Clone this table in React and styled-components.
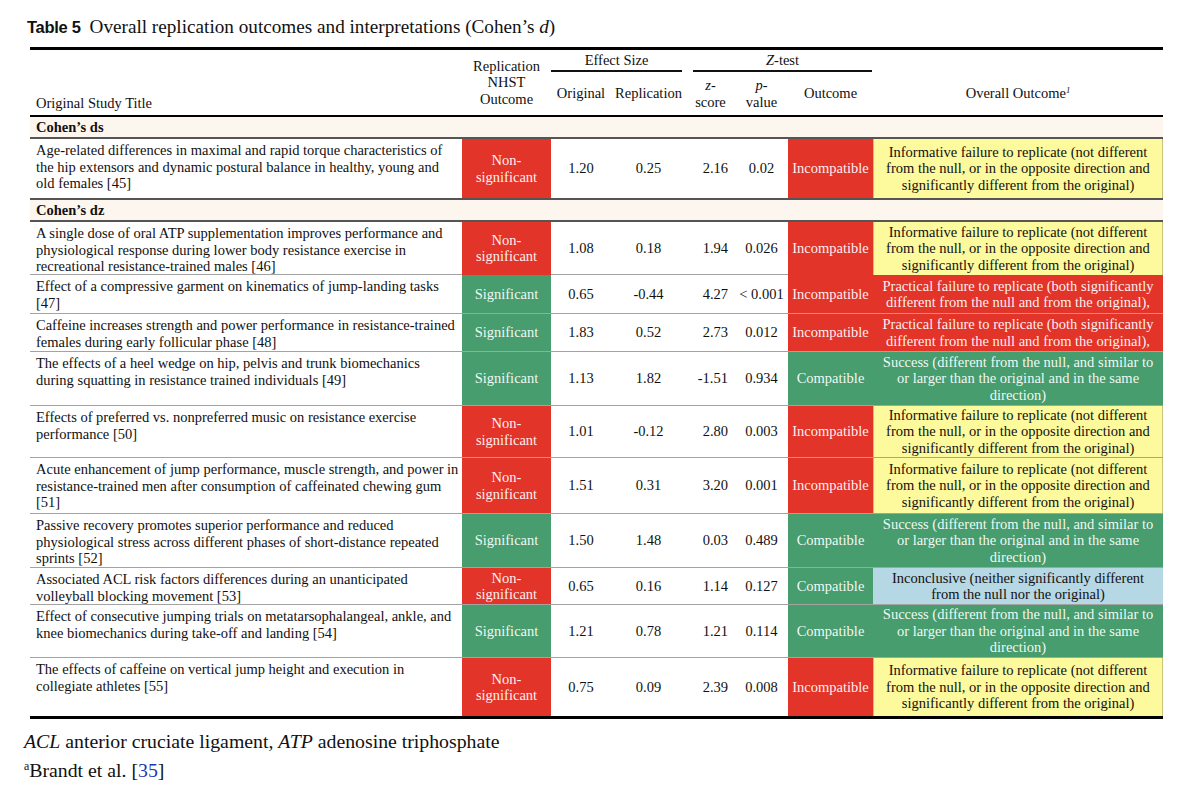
import React from "react";
import styled, { createGlobalStyle } from "styled-components";

const GlobalStyle = createGlobalStyle`
  body {
    margin: 0;
    background: #fff;
    color: #111;
    font-family: "Liberation Serif", "Times New Roman", serif;
  }
`;

const COLS = "432px 89px 60px 75px 49px 53px 85px 290px";

const FILL = {
  red: "#e3342a",
  green: "#479d6e",
  yellow: "#fdf99d",
  blue: "#b6d7e4",
};

const OVERALL = {
  informative: {
    fill: "yellow",
    lines: [
      "Informative failure to replicate (not different",
      "from the null, or in the opposite direction and",
      "significantly different from the original)",
    ],
  },
  practical: {
    fill: "red",
    lines: [
      "Practical failure to replicate (both significantly",
      "different from the null and from the original),",
    ],
  },
  success: {
    fill: "green",
    lines: [
      "Success (different from the null, and similar to",
      "or larger than the original and in the same",
      "direction)",
    ],
  },
  inconclusive: {
    fill: "blue",
    lines: [
      "Inconclusive (neither significantly different",
      "from the null nor the original)",
    ],
  },
};

const sections = [
  {
    label: "Cohen’s ds",
    rows: [
      {
        title: [
          "Age-related differences in maximal and rapid torque characteristics of",
          "the hip extensors and dynamic postural balance in healthy, young and",
          "old females [45]",
        ],
        sig: false, orig: "1.20", rep: "0.25", z: "2.16", p: "0.02",
        ok: false, overall: "informative", h: 61,
      },
    ],
  },
  {
    label: "Cohen’s dz",
    rows: [
      {
        title: [
          "A single dose of oral ATP supplementation improves performance and",
          "physiological response during lower body resistance exercise in",
          "recreational resistance-trained males [46]",
        ],
        sig: false, orig: "1.08", rep: "0.18", z: "1.94", p: "0.026",
        ok: false, overall: "informative", h: 53,
      },
      {
        title: ["Effect of a compressive garment on kinematics of jump-landing tasks", "[47]"],
        sig: true, orig: "0.65", rep: "-0.44", z: "4.27", p: "< 0.001",
        ok: false, overall: "practical", h: 39,
      },
      {
        title: [
          "Caffeine increases strength and power performance in resistance-trained",
          "females during early follicular phase [48]",
        ],
        sig: true, orig: "1.83", rep: "0.52", z: "2.73", p: "0.012",
        ok: false, overall: "practical", h: 38,
      },
      {
        title: [
          "The effects of a heel wedge on hip, pelvis and trunk biomechanics",
          "during squatting in resistance trained individuals [49]",
        ],
        sig: true, orig: "1.13", rep: "1.82", z: "-1.51", p: "0.934",
        ok: true, overall: "success", h: 54,
      },
      {
        title: [
          "Effects of preferred vs. nonpreferred music on resistance exercise",
          "performance [50]",
        ],
        sig: false, orig: "1.01", rep: "-0.12", z: "2.80", p: "0.003",
        ok: false, overall: "informative", h: 52,
      },
      {
        title: [
          "Acute enhancement of jump performance, muscle strength, and power in",
          "resistance-trained men after consumption of caffeinated chewing gum",
          "[51]",
        ],
        sig: false, orig: "1.51", rep: "0.31", z: "3.20", p: "0.001",
        ok: false, overall: "informative", h: 56,
      },
      {
        title: [
          "Passive recovery promotes superior performance and reduced",
          "physiological stress across different phases of short-distance repeated",
          "sprints [52]",
        ],
        sig: true, orig: "1.50", rep: "1.48", z: "0.03", p: "0.489",
        ok: true, overall: "success", h: 54,
      },
      {
        title: [
          "Associated ACL risk factors differences during an unanticipated",
          "volleyball blocking movement [53]",
        ],
        sig: false, orig: "0.65", rep: "0.16", z: "1.14", p: "0.127",
        ok: true, overall: "inconclusive", h: 37,
      },
      {
        title: [
          "Effect of consecutive jumping trials on metatarsophalangeal, ankle, and",
          "knee biomechanics during take-off and landing [54]",
        ],
        sig: true, orig: "1.21", rep: "0.78", z: "1.21", p: "0.114",
        ok: true, overall: "success", h: 53,
      },
      {
        title: [
          "The effects of caffeine on vertical jump height and execution in",
          "collegiate athletes [55]",
        ],
        sig: false, orig: "0.75", rep: "0.09", z: "2.39", p: "0.008",
        ok: false, overall: "informative", h: 58,
      },
    ],
  },
];

const Page = styled.div`
  padding: 15px 0 0 0;
`;

const Caption = styled.div`
  display: flex;
  align-items: baseline;
  gap: 9px;
  margin-left: 27px;
  line-height: 24px;
  height: 24px;
`;

const CaptionLabel = styled.span`
  font-family: "Liberation Sans", Arial, sans-serif;
  font-weight: 700;
  font-size: 16.5px;
  letter-spacing: -0.3px;
`;

const CaptionText = styled.span`
  font-size: 19.2px;
`;

const Table = styled.div`
  width: 1133px;
  margin: 8px 0 0 30px;
  border-top: 3px solid #000;
  border-bottom: 3px solid #000;
  font-size: 14.5px;
`;

const Head = styled.div`
  display: grid;
  grid-template-columns: ${COLS};
  grid-template-rows: 22px 43px;
  border-bottom: 2px solid #000;
  line-height: 16.5px;
`;

const HeadCell = styled.div`
  grid-column: ${(p) => p.$col};
  grid-row: ${(p) => p.$row};
  display: flex;
  flex-direction: column;
  align-items: ${(p) => (p.$left ? "flex-start" : "center")};
  justify-content: ${(p) => (p.$bottom ? "flex-end" : "center")};
  text-align: center;
  white-space: nowrap;
  padding: ${(p) => (p.$left ? "0 0 4px 6px" : "0")};
`;

const GroupHead = styled.div`
  grid-column: ${(p) => p.$col};
  grid-row: 1;
  margin: ${(p) => p.$margin};
  border-bottom: 2px solid #111;
  text-align: center;
  line-height: 20px;
`;

const Band = styled.div`
  height: 22px;
  box-sizing: border-box;
  background: #fdf6ee;
  border-bottom: 2px solid #555;
  padding: 1px 0 0 6px;
  font-weight: 700;
  line-height: 19px;
`;

const Row = styled.div`
  display: grid;
  grid-template-columns: ${COLS};
  height: ${(p) => p.$h}px;
  box-sizing: border-box;
  border-bottom: ${(p) => p.$rule};
  line-height: 16.5px;
`;

const TitleCell = styled.div`
  padding: 3px 0 0 6px;
  white-space: nowrap;
`;

const Cell = styled.div`
  display: flex;
  flex-direction: column;
  align-items: ${(p) => p.$align || "center"};
  justify-content: center;
  text-align: center;
  white-space: nowrap;
  padding-right: ${(p) => (p.$align === "flex-end" ? "7px" : "0")};
  background: ${(p) => (p.$fill ? FILL[p.$fill] : "transparent")};
  color: ${(p) =>
    p.$fill === "red" || p.$fill === "green" ? "rgba(255,255,255,0.94)" : "#111"};
  box-shadow: ${(p) =>
    p.$fill === "yellow" ? "inset 1px 0 #c9c27a, inset -1px 0 #c9c27a" : "none"};
`;

const Notes = styled.div`
  margin: 8px 0 0 24px;
  font-size: 19.8px;
  line-height: 29px;
`;

const NoteLink = styled.span`
  color: #1f35b5;
`;

const Sup = styled.sup`
  font-size: 0.6em;
  vertical-align: 0.6em;
  line-height: 0;
`;

const Lines = ({ lines }) =>
  lines.map((l, i) => <span key={i}>{l}</span>);

function DataRow({ row, rule }) {
  const overall = OVERALL[row.overall];
  return (
    <Row $h={row.h} $rule={rule}>
      <TitleCell>
        {row.title.map((l, i) => (
          <div key={i}>{l}</div>
        ))}
      </TitleCell>
      <Cell $fill={row.sig ? "green" : "red"}>
        {row.sig ? <span>Significant</span> : <Lines lines={["Non-", "significant"]} />}
      </Cell>
      <Cell>{row.orig}</Cell>
      <Cell>{row.rep}</Cell>
      <Cell $align="flex-end">{row.z}</Cell>
      <Cell>{row.p}</Cell>
      <Cell $fill={row.ok ? "green" : "red"}>{row.ok ? "Compatible" : "Incompatible"}</Cell>
      <Cell $fill={overall.fill}>
        <Lines lines={overall.lines} />
      </Cell>
    </Row>
  );
}

export default function App() {
  return (
    <Page>
      <GlobalStyle />
      <Caption>
        <CaptionLabel>Table 5</CaptionLabel>
        <CaptionText>
          Overall replication outcomes and interpretations (Cohen’s <i>d</i>)
        </CaptionText>
      </Caption>

      <Table>
        <Head>
          <HeadCell $col="1" $row="1 / 3" $left $bottom>
            Original Study Title
          </HeadCell>
          <HeadCell $col="2" $row="1 / 3">
            <span>Replication</span>
            <span>NHST</span>
            <span>Outcome</span>
          </HeadCell>
          <GroupHead $col="3 / 5" $margin="0 4px 0 0">Effect Size</GroupHead>
          <GroupHead $col="5 / 8" $margin="0 1px 0 7px">
            <i>Z</i>-test
          </GroupHead>
          <HeadCell $col="3" $row="2">Original</HeadCell>
          <HeadCell $col="4" $row="2">Replication</HeadCell>
          <HeadCell $col="5" $row="2">
            <span><i>z</i>-</span>
            <span>score</span>
          </HeadCell>
          <HeadCell $col="6" $row="2">
            <span><i>p</i>-</span>
            <span>value</span>
          </HeadCell>
          <HeadCell $col="7" $row="2">Outcome</HeadCell>
          <HeadCell $col="8" $row="2">
            <span>
              Overall Outcome<Sup><i>1</i></Sup>
            </span>
          </HeadCell>
        </Head>

        {sections.map((s, si) => (
          <React.Fragment key={s.label}>
            <Band>{s.label}</Band>
            {s.rows.map((r, ri) => {
              const last = ri === s.rows.length - 1;
              const finalSection = si === sections.length - 1;
              let rule = "1px solid #a3a3a3";
              if (last) rule = finalSection ? "none" : "2px solid #555";
              return <DataRow key={ri} row={r} rule={rule} />;
            })}
          </React.Fragment>
        ))}
      </Table>

      <Notes>
        <div>
          <i>ACL</i> anterior cruciate ligament, <i>ATP</i> adenosine triphosphate
        </div>
        <div>
          <Sup>a</Sup>Brandt et al. [<NoteLink>35</NoteLink>]
        </div>
      </Notes>
    </Page>
  );
}
